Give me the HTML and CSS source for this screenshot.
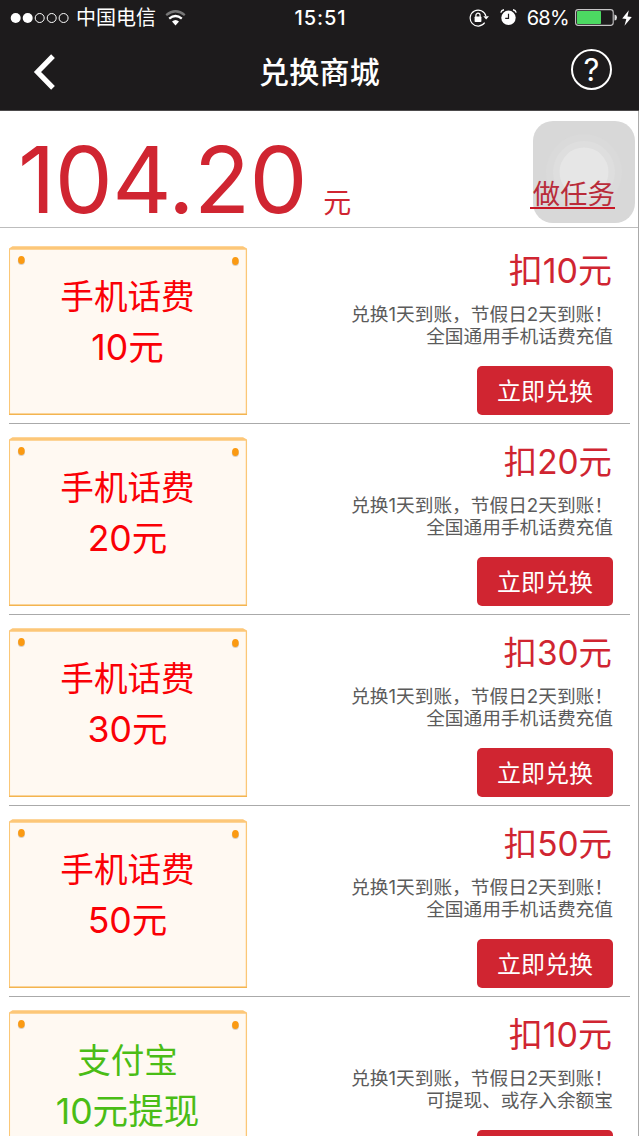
FILE: index.html
```html
<!DOCTYPE html>
<html lang="zh-CN">
<head>
<meta charset="utf-8">
<title>兑换商城</title>
<link rel="stylesheet" href="styles.css">
</head>
<body>
<svg class="defs" width="0" height="0" aria-hidden="true">
  <symbol id="ticket" viewBox="0 0 239 170">
    <rect x="0.5" y="3" width="237" height="166" fill="#fff9f2"/>
    <path d="M0.4 3V168.2H237.4V3" fill="none" stroke="#fbc777" stroke-width="1.3"/>
    <path d="M0 168.4H238" stroke="#f3b450" stroke-width="1.2"/>
    <path d="M0 3.8V2.4L3.5 .3H234L238 2.4V3.8Z" fill="#fdc778"/>
    <ellipse cx="12.4" cy="15" rx="3.6" ry="4" fill="#d9d0c4"/>
    <ellipse cx="226.4" cy="16" rx="3.6" ry="4" fill="#d9d0c4"/>
    <ellipse cx="12.4" cy="14" rx="3.3" ry="3.9" fill="#fb9a12"/>
    <ellipse cx="226.4" cy="15" rx="3.3" ry="3.9" fill="#fb9a12"/>
  </symbol>
</svg>
<div class="screen">
  <header class="top">
    <div class="status">
      <div class="status-left">
        <svg class="signal" width="60" height="12" viewBox="0 0 60 12"><g fill="#fff"><circle cx="5.7" cy="6" r="5"/><circle cx="17.7" cy="6" r="5"/></g><g fill="none" stroke="#fff"><circle cx="29.7" cy="6" r="4.5"/><circle cx="41.7" cy="6" r="4.5"/><circle cx="53.6" cy="6" r="4.5"/></g></svg>
        <span class="carrier">中国电信</span>
        <svg class="wifi" width="21" height="16" viewBox="0 0 21 16" fill="none"><path d="M1.2 5.2Q10.5 -2.6 19.8 5.2" stroke="#777" stroke-width="2.3"/><path d="M4.2 8.7Q10.5 3.3 16.8 8.7" stroke="#fff" stroke-width="2.3"/><path d="M7 11.6Q10.5 8.5 14 11.6L10.5 15.4Z" fill="#fff"/></svg>
      </div>
      <span class="time">15:51</span>
      <div class="status-right">
        <svg class="rotation" width="20" height="18" viewBox="0 0 20 18" fill="none" stroke="#fff" stroke-width="1.2"><path d="M16.9 7A8 8 0 1 0 15.7 13.7"/><path d="M14.3 7.2H20L17.1 10.6Z" fill="#fff" stroke="none"/><rect x="5.6" y="7.6" width="6.8" height="5.4" rx=".7" fill="#fff" stroke="none"/><path d="M6.9 8V6.3A2.1 2.1 0 0 1 11.1 6.3V8"/></svg>
        <svg class="alarm" width="17" height="17" viewBox="0 0 17 17"><circle cx="8.5" cy="8.8" r="7.2" fill="#fff"/><path d="M8.5 4.8V9.3H5.2" fill="none" stroke="#1d1b1c" stroke-width="1.2"/><path d="M.8 3.6Q1.5 1.2 4 .8M16.2 3.6Q15.5 1.2 13 .8" fill="none" stroke="#fff" stroke-width="1.4"/></svg>
        <span class="percent">68%</span>
        <svg class="battery" width="42" height="17" viewBox="0 0 42 17"><rect x=".6" y=".6" width="37.6" height="15.8" rx="2.6" fill="none" stroke="#c6c5c6" stroke-width="1.1"/><rect x="2" y="2" width="24" height="13" rx=".7" fill="#4cd962"/><path d="M39.5 5.5Q42 6 42 8.5T39.5 11.5Z" fill="#e0e0e0"/></svg>
        <svg class="bolt" width="10" height="16" viewBox="0 0 10 16"><path d="M6.8 .3L.2 8.6L4.3 9.1L2.5 15.7L9.8 6.9L5.5 6.4Z" fill="#fff"/></svg>
      </div>
    </div>
    <nav class="nav">
      <svg class="back" width="22" height="36" viewBox="0 0 22 36"><path d="M20 2.1L4.5 18L20 33.9" fill="none" stroke="#fff" stroke-width="5.2"/></svg>
      <h1 class="title">兑换商城</h1>
      <span class="help">?</span>
    </nav>
  </header>

  <main class="page">
    <section class="balance">
      <div class="sum"><span class="number">104.20</span><span class="unit">元</span></div>
      <svg class="assistive" width="102" height="102" viewBox="0 0 102 102"><rect width="102" height="102" rx="20" fill="#d8d8d8"/><circle cx="51" cy="51" r="38" fill="#dadada"/><circle cx="51" cy="51" r="31" fill="#dedede"/><circle cx="51" cy="51" r="24.5" fill="#e6e6e6"/></svg>
      <a class="task">做任务</a>
    </section>

    <section class="list">
      <article class="row">
        <div class="ticket"><svg class="frame"><use href="#ticket"/></svg><div class="face"><p>手机话费</p><p class="value">10元</p></div></div>
        <div class="info"><p class="cost ten">扣10元</p><p class="note">兑换1天到账，节假日2天到账！</p><p class="note">全国通用手机话费充值</p><button class="redeem">立即兑换</button></div>
      </article>
      <article class="row">
        <div class="ticket"><svg class="frame"><use href="#ticket"/></svg><div class="face"><p>手机话费</p><p class="value">20元</p></div></div>
        <div class="info"><p class="cost">扣20元</p><p class="note">兑换1天到账，节假日2天到账！</p><p class="note">全国通用手机话费充值</p><button class="redeem">立即兑换</button></div>
      </article>
      <article class="row">
        <div class="ticket"><svg class="frame"><use href="#ticket"/></svg><div class="face"><p>手机话费</p><p class="value">30元</p></div></div>
        <div class="info"><p class="cost">扣30元</p><p class="note">兑换1天到账，节假日2天到账！</p><p class="note">全国通用手机话费充值</p><button class="redeem">立即兑换</button></div>
      </article>
      <article class="row">
        <div class="ticket"><svg class="frame"><use href="#ticket"/></svg><div class="face"><p>手机话费</p><p class="value">50元</p></div></div>
        <div class="info"><p class="cost">扣50元</p><p class="note">兑换1天到账，节假日2天到账！</p><p class="note">全国通用手机话费充值</p><button class="redeem">立即兑换</button></div>
      </article>
      <article class="row">
        <div class="ticket alipay"><svg class="frame"><use href="#ticket"/></svg><div class="face"><p>支付宝</p><p class="value">10元提现</p></div></div>
        <div class="info"><p class="cost ten">扣10元</p><p class="note">兑换1天到账，节假日2天到账！</p><p class="note">可提现、或存入余额宝</p><button class="redeem" aria-label="立即兑换"></button></div>
      </article>
    </section>
  </main>
</div>
</body>
</html>
```
FILE: styles.css
```css
* { box-sizing: border-box; }
body { margin: 0; background: #fff; font-family: Inter, "Noto Sans CJK SC", sans-serif; }
p, h1 { margin: 0; }
svg { display: block; flex: none; }
.defs { position: absolute; }
.screen { width: 639px; height: 1136px; overflow: hidden; display: flex; flex-direction: column; }

.top { flex: none; height: 111px; background: #1d1b1c; border-bottom: 1px solid #4c4a4b; color: #fff; }
.status { height: 35px; display: grid; grid-template-columns: 1fr auto 1fr; align-items: center; padding: 0 8px 0 10px; line-height: 35px; }
.status-left, .status-right { display: flex; align-items: center; }
.status-right { justify-content: flex-end; }
.status-right svg { margin-bottom: 1px; }
.carrier { font-size: 20px; margin-left: 6px; padding-top: 1px; }
.wifi { margin-left: 9px; margin-bottom: 1px; }
.time { font-size: 20px; font-weight: 500; letter-spacing: .9px; }
.alarm { margin-left: 11px; }
.percent { font-size: 20px; margin-left: 10px; letter-spacing: -.7px; }
.battery { margin-left: 6px; }
.bolt { margin-left: 5px; }
.status-right { margin-right: -1px; }

.nav { height: 75px; display: grid; grid-template-columns: 1fr auto 1fr; align-items: center; padding: 0 27px 2px 33px; }
.title { font-size: 30px; font-weight: 500; line-height: 40px; margin-left: -6px; letter-spacing: .2px; }
.help { justify-self: end; width: 41px; height: 41px; margin-top: -5px; border: 2.5px solid #fff; border-radius: 50%; text-align: center; font-size: 31px; line-height: 37px; }

.page { flex: 1; min-height: 0; border-right: 1px solid #aaa; }
.balance { position: relative; height: 117px; border-bottom: 1px solid #bdbdbd; padding: 0 23px 0 18px; display: flex; justify-content: space-between; color: #d02531; }
.sum { display: flex; align-items: baseline; line-height: 138px; }
.number { font-size: 92px; letter-spacing: -.6px; }
.unit { font-size: 28px; margin-left: 16.5px; }
.assistive { position: absolute; left: 533px; top: 10px; }
.task { position: relative; align-self: flex-start; margin-top: 63px; padding-left: 3px; height: 35px; border-bottom: 2px solid #c71826; font-size: 27.4px; line-height: 41px; color: #b92c3a; }

.list { padding: 5px 8px 0 9px; }
.row { height: 191px; border-bottom: 1px solid #aaa; padding: 13px 17px 0 0; display: flex; justify-content: space-between; }
.ticket { width: 239px; height: 170px; display: grid; color: #fa0006; }
.ticket.alipay { color: #4abd16; }
.frame, .face { grid-area: 1 / 1; }
.frame { width: 239px; height: 170px; }
.face { z-index: 1; padding: 26px 2px 0 0; text-align: center; font-size: 33.6px; line-height: 50.5px; }
.value { font-size: 35.6px; }
.info { display: flex; flex-direction: column; align-items: flex-end; }
.cost { font-size: 33.4px; line-height: 48px; margin: 1px 1px 9px 0; color: #d02531; }
.cost.ten { font-size: 34px; }
.note { font-size: 18.7px; line-height: 22px; color: #5b5b5b; white-space: nowrap; }
.redeem { width: 136px; height: 49px; margin-top: 18px; padding: 0; border: 0; border-radius: 5px; background: #d02531; color: #fff; font: 24px/51px Inter, "Noto Sans CJK SC", sans-serif; }
```
